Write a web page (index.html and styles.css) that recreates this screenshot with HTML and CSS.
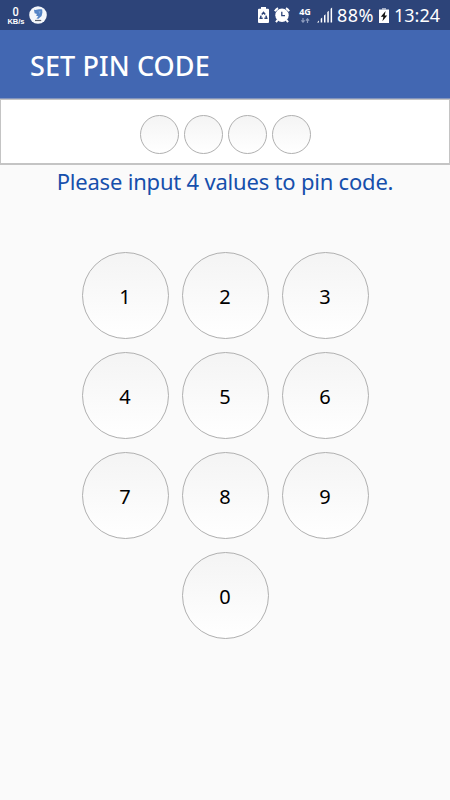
FILE: index.html
```
<!DOCTYPE html>
<html lang="en">
<head>
	<meta charset="UTF-8">
	<title>Set Pin Code</title>
	<link rel="stylesheet" href="styles.css">
</head>
<body>
	<div class="status">
		<div class="speed">
			<span class="num">0</span>
			<span class="unit">KB/s</span>
		</div>
		<svg class="app" width="18" height="18" viewBox="0 0 18 18">
			<circle cx="9" cy="9" r="8.8" fill="#f4f7fb"/>
			<path d="M5 3.8C7.6 4.4 9.6 2.8 13.2 3.4L13.4 6.6 12.6 10 9.4 12.8 7.4 12.4 9.4 10.4 7 9.4 8 8 5.6 7.2Z" fill="#5585c6"/>
			<path d="M9.4 5.4L11.6 5 10.8 8Z" fill="#7ea5d9"/>
			<path d="M6 14.5H12.2" stroke="#59606b" stroke-width="1.2"/>
		</svg>
		<div class="right">
			<svg class="saver" width="11" height="16" viewBox="0 0 11 16">
				<path d="M3 0H8V1.7H10A1 1 0 0 1 11 2.7V15A1 1 0 0 1 10 16H1A1 1 0 0 1 0 15V2.7A1 1 0 0 1 1 1.7H3Z" fill="#fff"/>
				<path d="M3.8 7.4L5.5 5.4 7.2 7.4M7.9 8.6L8.7 11.2H6.4M4.7 11.2H2.3L3.1 8.6" fill="none" stroke="#2d4479" stroke-width="1.5"/>
			</svg>
			<svg class="alarm" width="16" height="16" viewBox="0 0 16 16">
				<path d="M.9 4.2A8 8 0 0 1 4 1.1M12 1.1A8 8 0 0 1 15.1 4.2M3.6 13L2 15.2M12.4 13L14 15.2" fill="none" stroke="#fff" stroke-width="2"/>
				<circle cx="8" cy="8.3" r="6.7" fill="#fff"/>
				<path d="M7.8 4.8V8.6H11" fill="none" stroke="#2d4479" stroke-width="1.3"/>
			</svg>
			<div class="network">
				<span>4G</span>
				<svg width="9" height="5" viewBox="0 0 9 5">
					<path d="M2 0V4M.4 2.4L2 4.2 3.6 2.4M6.5 5V1M4.9 2.6L6.5.8 8.1 2.6" fill="none" stroke="#8e9dbf" stroke-width="1.2"/>
				</svg>
			</div>
			<svg class="signal" width="16" height="16" viewBox="0 0 16 16">
				<path d="M0 15.5L2 13.5V15.5ZM3.7 15.5V11.8L5.2 10.6V15.5ZM7 15.5V8.6L8.5 7.3V15.5ZM10.3 15.5V5L11.8 3.7V15.5ZM13.6 15.5V1.8L15.1.5V15.5Z" fill="#fff"/>
			</svg>
			<span class="percent">88%</span>
			<svg class="battery" width="10" height="15" viewBox="0 0 10 15">
				<path d="M3 0H7V1.6H3Z" fill="#a5afc8"/>
				<path d="M0 1.5H10V15H0Z" fill="#fff"/>
				<path d="M6.6 3L1.8 8.8H4.4L3.4 13.2 8.2 7.4H5.7Z" fill="#111"/>
			</svg>
			<span class="clock">13:24</span>
		</div>
	</div>
	<header>
		<h1>SET PIN CODE</h1>
	</header>
	<main>
		<section class="pins">
			<div class="pin"></div>
			<div class="pin"></div>
			<div class="pin"></div>
			<div class="pin"></div>
		</section>
		<p class="message">Please input 4 values to pin code.</p>
		<section class="keypad">
			<button>1</button>
			<button>2</button>
			<button>3</button>
			<button>4</button>
			<button>5</button>
			<button>6</button>
			<button>7</button>
			<button>8</button>
			<button>9</button>
			<button class="zero">0</button>
		</section>
	</main>
</body>
</html>
```

FILE: styles.css
```
* {
	box-sizing: border-box;
}
body {
	margin: 0;
	height: 800px;
	background-color: #fafafa;
	font-family: "Noto Sans", sans-serif;
	overflow: hidden;
}

/*status bar*/
.status {
	display: flex;
	align-items: center;
	height: 30px;
	padding: 0 10px 0 7px;
	background-color: #2d4479;
	color: #fff;
}
.speed {
	display: flex;
	flex-direction: column;
	align-items: center;
	width: 18px;
	font-family: Roboto, sans-serif;
	font-weight: 500;
}
.speed .num {
	font-size: 13px;
	line-height: 13px;
	transform: scaleX(.85);
}
.speed .unit {
	font: bold 7.5px/8px "Liberation Sans", sans-serif;
}
.app {
	margin-left: 4px;
}
.right {
	display: flex;
	align-items: center;
	margin-left: auto;
}
.alarm {
	margin-left: 5px;
}
.network {
	display: flex;
	flex-direction: column;
	align-items: center;
	width: 14px;
	margin-left: 8px;
	font: bold 9px/10px "Noto Sans", sans-serif;
}
.network svg {
	margin-top: 1px;
}
.signal {
	margin-left: 5px;
}
.percent {
	width: 38px;
	margin-left: 4px;
	font-size: 18px;
	letter-spacing: 0.4px;
	white-space: nowrap;
}
.battery {
	margin-left: 4px;
}
.clock {
	width: 46px;
	margin-left: 5px;
	font-size: 18px;
}

/*title bar*/
header {
	display: flex;
	align-items: center;
	height: 69px;
	padding: 2px 30px 0;
	background-color: #4267b2;
	border-bottom: 1px solid #8294bd;
}
header h1 {
	margin: 0;
	color: #fff;
	font-size: 27px;
	font-weight: 500;
	letter-spacing: 0.1px;
	white-space: nowrap;
}

/*entered values*/
.pins {
	display: flex;
	justify-content: center;
	gap: 5px;
	height: 66px;
	padding-top: 15px;
	background-color: #fff;
	border: 1px solid #c4c4c4;
	border-bottom-width: 2px;
}
.pin {
	width: 39px;
	height: 39px;
	border: 1px solid #b0b0b0;
	border-radius: 50%;
	background: linear-gradient(#f4f4f4, #fff);
}
.message {
	margin: 0;
	color: #164fac;
	font-size: 22px;
	letter-spacing: -0.2px;
	line-height: 32px;
	text-align: center;
	white-space: nowrap;
}

/*keypad*/
.keypad {
	display: grid;
	grid-template-columns: repeat(3, 87px);
	grid-auto-rows: 87px;
	gap: 13px;
	justify-content: center;
	margin-top: 55px;
}
.keypad button {
	padding: 1px 0 0;
	border: 1px solid #b0b0b0;
	border-radius: 50%;
	background: linear-gradient(#f4f4f4, #fff);
	color: #000;
	font: 20px "Noto Sans", sans-serif;
}
.keypad .zero {
	grid-column: 2;
}
```
